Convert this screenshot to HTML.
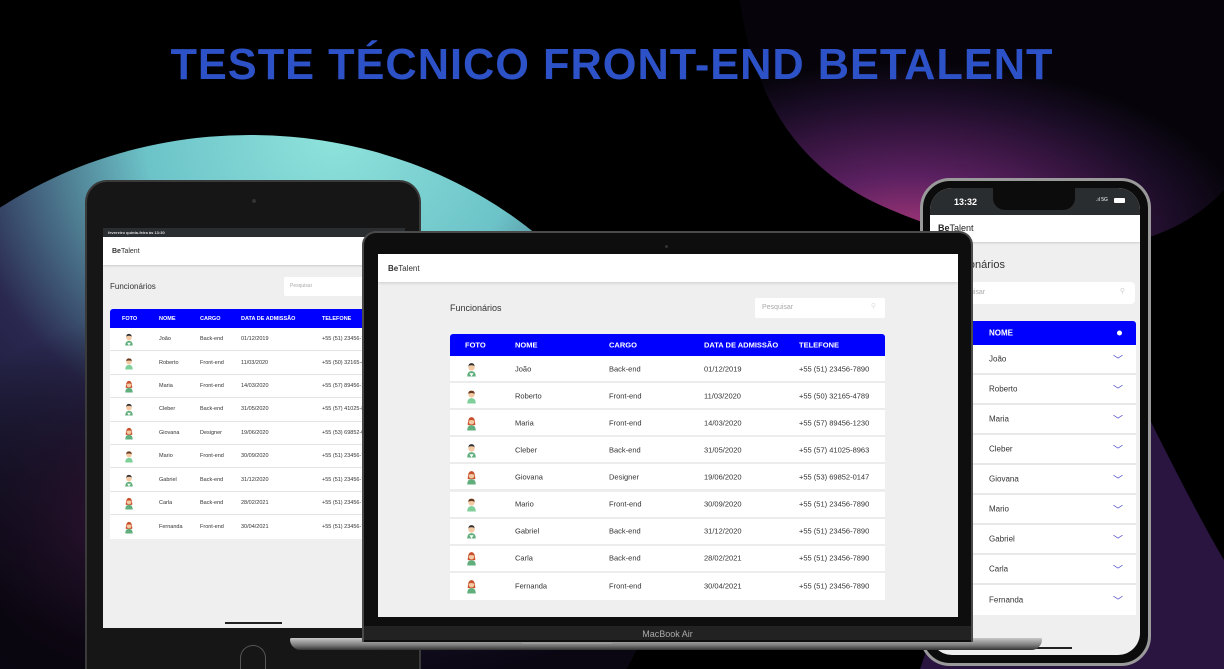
<!DOCTYPE html>
<html><head><meta charset="utf-8"><style>
*{margin:0;padding:0;box-sizing:border-box}
html,body{width:1224px;height:669px;overflow:hidden}
body{background:#000;position:relative;font-family:"Liberation Sans",sans-serif}
.abs{position:absolute}
.title{position:absolute;left:0;width:1224px;top:40px;text-align:center;color:#2d52c8;font-weight:bold;font-size:44px;letter-spacing:1px;transform:scaleX(0.985);transform-origin:center;white-space:nowrap}
.row{position:absolute;left:0;right:0;background:#fff;border-bottom:1px solid #e4e4e4}
.row span,.hd span{position:absolute;top:50%;transform:translateY(-50%);white-space:nowrap}
.hd{position:absolute;left:0;right:0;background:#0000ff;color:#fff;font-weight:bold;border-radius:3px 3px 0 0}
svg.av{position:absolute;top:50%;transform:translateY(-50%)}
</style></head><body>
<svg width="0" height="0" style="position:absolute">
<defs>
<symbol id="m" viewBox="0 0 10 14"><path d="M1 14 Q1 9 5 9 Q9 9 9 14Z" fill="#5fae7c"/><path d="M3 11 L5 14 L7 11" fill="#fff"/><circle cx="5" cy="5.5" r="3" fill="#f3c9a3"/><path d="M2 5 Q2 1.5 5 1.5 Q8 1.5 8 5 L7.5 4 Q5 3 2.5 4Z" fill="#333"/></symbol>
<symbol id="f" viewBox="0 0 10 14"><path d="M1 14 Q1 9 5 9 Q9 9 9 14Z" fill="#5fae7c"/><path d="M1.5 9 Q1.5 1.5 5 1.5 Q8.5 1.5 8.5 9Z" fill="#c8502c"/><circle cx="5" cy="5.7" r="2.7" fill="#f3c9a3"/><path d="M2.3 5 Q3 2.5 5 2.5 Q7.3 2.5 7.7 5 Q5 3.5 2.3 5Z" fill="#c8502c"/></symbol>
<symbol id="m2" viewBox="0 0 10 14"><path d="M1 14 Q1 9 5 9 Q9 9 9 14Z" fill="#7fcf9a"/><circle cx="5" cy="5.5" r="3" fill="#f3c9a3"/><path d="M2 5 Q2 2 5 2 Q8 2 8 5 Q5 3.5 2 5Z" fill="#6b3a1e"/></symbol>
<radialGradient id="teal" cx="0.6" cy="0.0" r="0.75"><stop offset="0" stop-color="#8fe3dc"/><stop offset="0.3" stop-color="#6cc3c8"/><stop offset="0.6" stop-color="#2a2850"/><stop offset="1" stop-color="#0a0612"/></radialGradient>
<radialGradient id="pur" cx="0.35" cy="0.95" r="0.7"><stop offset="0" stop-color="#a8387a"/><stop offset="0.35" stop-color="#5a2060"/><stop offset="0.8" stop-color="#1a0c26"/><stop offset="1" stop-color="#06040a"/></radialGradient>
<radialGradient id="pur2" cx="0.5" cy="0.5" r="0.5"><stop offset="0" stop-color="#2e1230"/><stop offset="1" stop-color="#000" stop-opacity="0"/></radialGradient>
</defs></svg>

<svg class="abs" style="left:0;top:0" width="1224" height="669">
<ellipse cx="250" cy="505" rx="420" ry="370" fill="url(#teal)"/>
<ellipse cx="120" cy="520" rx="200" ry="200" fill="url(#pur2)"/>
<path d="M740 0 Q760 150 880 205 Q990 255 1100 248 Q1180 238 1224 190 L1224 0Z" fill="url(#pur)"/>
<path d="M1150 420 Q1200 520 1224 560 L1224 669 L1100 669 Q1150 600 1150 420Z" fill="#2a1440"/>
<path d="M930 640 L1160 640 L1180 669 L920 669Z" fill="#2a1440"/>
</svg>

<div class="title">TESTE TÉCNICO FRONT-END BETALENT</div>

<!-- TABLET -->
<div class="abs" style="left:85px;top:180px;width:336px;height:489px;background:#161616;border-radius:22px 22px 0 0;border:2px solid #3a3a3a;border-bottom:0"></div>
<div class="abs" style="left:252px;top:199px;width:4px;height:4px;border-radius:50%;background:#333"></div>
<div class="abs" style="left:103px;top:228px;width:302px;height:400px;background:#efefef;overflow:hidden">
 <div class="abs" style="left:0;top:0;width:100%;height:9px;background:#2b2e31;color:#ddd;font-size:4px;font-weight:bold;padding:2px 0 0 5px">fevereiro quinta-feira às 13:30</div>
 <div class="abs" style="left:0;top:9px;width:100%;height:28px;background:#fff;box-shadow:0 1px 2px rgba(0,0,0,.15);font-size:7px;padding:11px 0 0 9px;color:#333"><b>Be</b>Talent</div>
 <div class="abs" style="left:7px;top:54px;font-size:8px;color:#333">Funcionários</div>
 <div class="abs" style="left:181px;top:49px;width:80px;height:19px;background:#fff;border-radius:2px;font-size:5px;color:#aaa;padding:6px 0 0 6px">Pesquisar</div>
 <div class="abs" style="left:7px;top:81px;width:260px;height:240px;font-size:5.5px;color:#333">
  <div class="hd" style="top:0;height:19px"><span style="left:12px">FOTO</span><span style="left:49px">NOME</span><span style="left:90px">CARGO</span><span style="left:131px">DATA DE ADMISSÃO</span><span style="left:212px">TELEFONE</span></div>
  <div class="row" style="top:19px;height:23.4px"><svg class="av" style="left:14px" width="10" height="13"><use href="#m"/></svg><span style="left:49px">João</span><span style="left:90px">Back-end</span><span style="left:131px">01/12/2019</span><span style="left:212px">+55 (51) 23456-7890</span></div>
  <div class="row" style="top:42.4px;height:23.4px"><svg class="av" style="left:14px" width="10" height="13"><use href="#m2"/></svg><span style="left:49px">Roberto</span><span style="left:90px">Front-end</span><span style="left:131px">11/03/2020</span><span style="left:212px">+55 (50) 32165-4789</span></div>
  <div class="row" style="top:65.8px;height:23.4px"><svg class="av" style="left:14px" width="10" height="13"><use href="#f"/></svg><span style="left:49px">Maria</span><span style="left:90px">Front-end</span><span style="left:131px">14/03/2020</span><span style="left:212px">+55 (57) 89456-1230</span></div>
  <div class="row" style="top:89.2px;height:23.4px"><svg class="av" style="left:14px" width="10" height="13"><use href="#m"/></svg><span style="left:49px">Cleber</span><span style="left:90px">Back-end</span><span style="left:131px">31/05/2020</span><span style="left:212px">+55 (57) 41025-8963</span></div>
  <div class="row" style="top:112.6px;height:23.4px"><svg class="av" style="left:14px" width="10" height="13"><use href="#f"/></svg><span style="left:49px">Giovana</span><span style="left:90px">Designer</span><span style="left:131px">19/06/2020</span><span style="left:212px">+55 (53) 69852-0147</span></div>
  <div class="row" style="top:136px;height:23.4px"><svg class="av" style="left:14px" width="10" height="13"><use href="#m2"/></svg><span style="left:49px">Mario</span><span style="left:90px">Front-end</span><span style="left:131px">30/09/2020</span><span style="left:212px">+55 (51) 23456-7890</span></div>
  <div class="row" style="top:159.4px;height:23.4px"><svg class="av" style="left:14px" width="10" height="13"><use href="#m"/></svg><span style="left:49px">Gabriel</span><span style="left:90px">Back-end</span><span style="left:131px">31/12/2020</span><span style="left:212px">+55 (51) 23456-7890</span></div>
  <div class="row" style="top:182.8px;height:23.4px"><svg class="av" style="left:14px" width="10" height="13"><use href="#f"/></svg><span style="left:49px">Carla</span><span style="left:90px">Back-end</span><span style="left:131px">28/02/2021</span><span style="left:212px">+55 (51) 23456-7890</span></div>
  <div class="row" style="top:206.2px;height:23.4px;border:0"><svg class="av" style="left:14px" width="10" height="13"><use href="#f"/></svg><span style="left:49px">Fernanda</span><span style="left:90px">Front-end</span><span style="left:131px">30/04/2021</span><span style="left:212px">+55 (51) 23456-7890</span></div>
 </div>
 <div class="abs" style="left:122px;top:394px;width:57px;height:2px;background:#222"></div>
</div>
<div class="abs" style="left:240px;top:645px;width:26px;height:24px;border-radius:13px 13px 0 0;border:1px solid #555;border-bottom:0"></div>

<!-- PHONE -->
<div class="abs" style="left:920px;top:178px;width:231px;height:488px;background:#0c0c0c;border-radius:30px;border:3px solid #9a9a9a"></div>
<div class="abs" style="left:930px;top:188px;width:210px;height:467px;background:#efefef;border-radius:22px;overflow:hidden">
 <div class="abs" style="left:0;top:0;width:100%;height:28px;background:#2a2d30"></div>
 <div class="abs" style="left:24px;top:9px;color:#fff;font-size:9px;font-weight:bold">13:32</div>
 <div class="abs" style="left:166px;top:9px;color:#fff;font-size:5px">.ıl 5G</div>
 <div class="abs" style="left:184px;top:10px;width:11px;height:5px;background:#fff;border-radius:1px"></div>
 <div class="abs" style="left:63px;top:0;width:82px;height:22px;background:#0c0c0c;border-radius:0 0 12px 12px"></div>
 <div class="abs" style="left:0;top:27px;width:100%;height:27px;background:#fff;box-shadow:0 1px 2px rgba(0,0,0,.15);font-size:9px;padding:8px 0 0 8px;color:#222"><b>Be</b>Talent</div>
 <div class="abs" style="left:12px;top:71px;font-size:11px;color:#333">Funcionários</div>
 <div class="abs" style="left:14px;top:94px;width:191px;height:22px;background:#fff;border-radius:4px;font-size:7px;color:#aaa;padding:7px 0 0 10px">Pesquisar<span style="position:absolute;right:10px;top:5px;color:#ccc">⚲</span></div>
 <div class="abs" style="left:20px;top:133px;width:186px;height:300px;font-size:8px;color:#333">
  <div class="hd" style="top:0;height:24px"><span style="left:39px">NOME</span><span style="left:167px;width:5px;height:5px;border-radius:50%;background:#fff"></span></div>
  <div class="row" style="top:24px;height:30px;border-bottom:2px solid #e8e8e8"><span style="left:39px">João</span><span style="left:163px;color:#44c;font-size:10px">﹀</span></div>
  <div class="row" style="top:54px;height:30px;border-bottom:2px solid #e8e8e8"><span style="left:39px">Roberto</span><span style="left:163px;color:#44c;font-size:10px">﹀</span></div>
  <div class="row" style="top:84px;height:30px;border-bottom:2px solid #e8e8e8"><span style="left:39px">Maria</span><span style="left:163px;color:#44c;font-size:10px">﹀</span></div>
  <div class="row" style="top:114px;height:30px;border-bottom:2px solid #e8e8e8"><span style="left:39px">Cleber</span><span style="left:163px;color:#44c;font-size:10px">﹀</span></div>
  <div class="row" style="top:144px;height:30px;border-bottom:2px solid #e8e8e8"><span style="left:39px">Giovana</span><span style="left:163px;color:#44c;font-size:10px">﹀</span></div>
  <div class="row" style="top:174px;height:30px;border-bottom:2px solid #e8e8e8"><span style="left:39px">Mario</span><span style="left:163px;color:#44c;font-size:10px">﹀</span></div>
  <div class="row" style="top:204px;height:30px;border-bottom:2px solid #e8e8e8"><span style="left:39px">Gabriel</span><span style="left:163px;color:#44c;font-size:10px">﹀</span></div>
  <div class="row" style="top:234px;height:30px;border-bottom:2px solid #e8e8e8"><span style="left:39px">Carla</span><span style="left:163px;color:#44c;font-size:10px">﹀</span></div>
  <div class="row" style="top:264px;height:30px;border:0"><span style="left:39px">Fernanda</span><span style="left:163px;color:#44c;font-size:10px">﹀</span></div>
 </div>
 <div class="abs" style="left:72px;top:459px;width:70px;height:2px;background:#222"></div>
</div>

<!-- LAPTOP -->
<div class="abs" style="left:290px;top:638px;width:752px;height:12px;background:linear-gradient(#c8c8c8,#7a7a7a 60%,#333);border-radius:2px 2px 14px 14px"></div>
<div class="abs" style="left:522px;top:640px;width:90px;height:4px;background:#9a9a9a"></div>
<div class="abs" style="left:362px;top:231px;width:611px;height:411px;background:#0e0e0e;border-radius:14px 14px 0 0;border:2px solid #4a4a4a;border-bottom:0"></div>
<div class="abs" style="left:364px;top:626px;width:607px;height:14px;background:#222;color:#aaa;font-size:9px;text-align:center;padding-top:3px">MacBook Air</div>
<div class="abs" style="left:665px;top:245px;width:3px;height:3px;border-radius:50%;background:#333"></div>
<div class="abs" style="left:378px;top:254px;width:580px;height:363px;background:#efefef;overflow:hidden">
 <div class="abs" style="left:0;top:0;width:100%;height:28px;background:#fff;box-shadow:0 1px 3px rgba(0,0,0,.15);font-size:8px;padding:10px 0 0 10px;color:#333"><b>Be</b>Talent</div>
 <div class="abs" style="left:72px;top:49px;font-size:9px;color:#333">Funcionários</div>
 <div class="abs" style="left:377px;top:44px;width:130px;height:20px;background:#fff;border-radius:2px;font-size:7px;color:#aaa;padding:6px 0 0 7px">Pesquisar<span style="position:absolute;right:9px;top:4px;color:#ddd">⚲</span></div>
 <div class="abs" style="left:72px;top:80px;width:435px;height:270px;font-size:7.5px;color:#333">
  <div class="hd" style="top:0;height:22px"><span style="left:15px">FOTO</span><span style="left:65px">NOME</span><span style="left:159px">CARGO</span><span style="left:254px">DATA DE ADMISSÃO</span><span style="left:349px">TELEFONE</span></div>
  <div class="row" style="top:22px;height:27.1px;border-bottom:2px solid #ececec"><svg class="av" style="left:16px" width="11" height="15"><use href="#m"/></svg><span style="left:65px">João</span><span style="left:159px">Back-end</span><span style="left:254px">01/12/2019</span><span style="left:349px">+55 (51) 23456-7890</span></div>
  <div class="row" style="top:49.1px;height:27.1px;border-bottom:2px solid #ececec"><svg class="av" style="left:16px" width="11" height="15"><use href="#m2"/></svg><span style="left:65px">Roberto</span><span style="left:159px">Front-end</span><span style="left:254px">11/03/2020</span><span style="left:349px">+55 (50) 32165-4789</span></div>
  <div class="row" style="top:76.2px;height:27.1px;border-bottom:2px solid #ececec"><svg class="av" style="left:16px" width="11" height="15"><use href="#f"/></svg><span style="left:65px">Maria</span><span style="left:159px">Front-end</span><span style="left:254px">14/03/2020</span><span style="left:349px">+55 (57) 89456-1230</span></div>
  <div class="row" style="top:103.3px;height:27.1px;border-bottom:2px solid #ececec"><svg class="av" style="left:16px" width="11" height="15"><use href="#m"/></svg><span style="left:65px">Cleber</span><span style="left:159px">Back-end</span><span style="left:254px">31/05/2020</span><span style="left:349px">+55 (57) 41025-8963</span></div>
  <div class="row" style="top:130.4px;height:27.1px;border-bottom:2px solid #ececec"><svg class="av" style="left:16px" width="11" height="15"><use href="#f"/></svg><span style="left:65px">Giovana</span><span style="left:159px">Designer</span><span style="left:254px">19/06/2020</span><span style="left:349px">+55 (53) 69852-0147</span></div>
  <div class="row" style="top:157.5px;height:27.1px;border-bottom:2px solid #ececec"><svg class="av" style="left:16px" width="11" height="15"><use href="#m2"/></svg><span style="left:65px">Mario</span><span style="left:159px">Front-end</span><span style="left:254px">30/09/2020</span><span style="left:349px">+55 (51) 23456-7890</span></div>
  <div class="row" style="top:184.6px;height:27.1px;border-bottom:2px solid #ececec"><svg class="av" style="left:16px" width="11" height="15"><use href="#m"/></svg><span style="left:65px">Gabriel</span><span style="left:159px">Back-end</span><span style="left:254px">31/12/2020</span><span style="left:349px">+55 (51) 23456-7890</span></div>
  <div class="row" style="top:211.7px;height:27.1px;border-bottom:2px solid #ececec"><svg class="av" style="left:16px" width="11" height="15"><use href="#f"/></svg><span style="left:65px">Carla</span><span style="left:159px">Back-end</span><span style="left:254px">28/02/2021</span><span style="left:349px">+55 (51) 23456-7890</span></div>
  <div class="row" style="top:238.8px;height:27.1px;border:0"><svg class="av" style="left:16px" width="11" height="15"><use href="#f"/></svg><span style="left:65px">Fernanda</span><span style="left:159px">Front-end</span><span style="left:254px">30/04/2021</span><span style="left:349px">+55 (51) 23456-7890</span></div>
 </div>
</div>
</body></html>
